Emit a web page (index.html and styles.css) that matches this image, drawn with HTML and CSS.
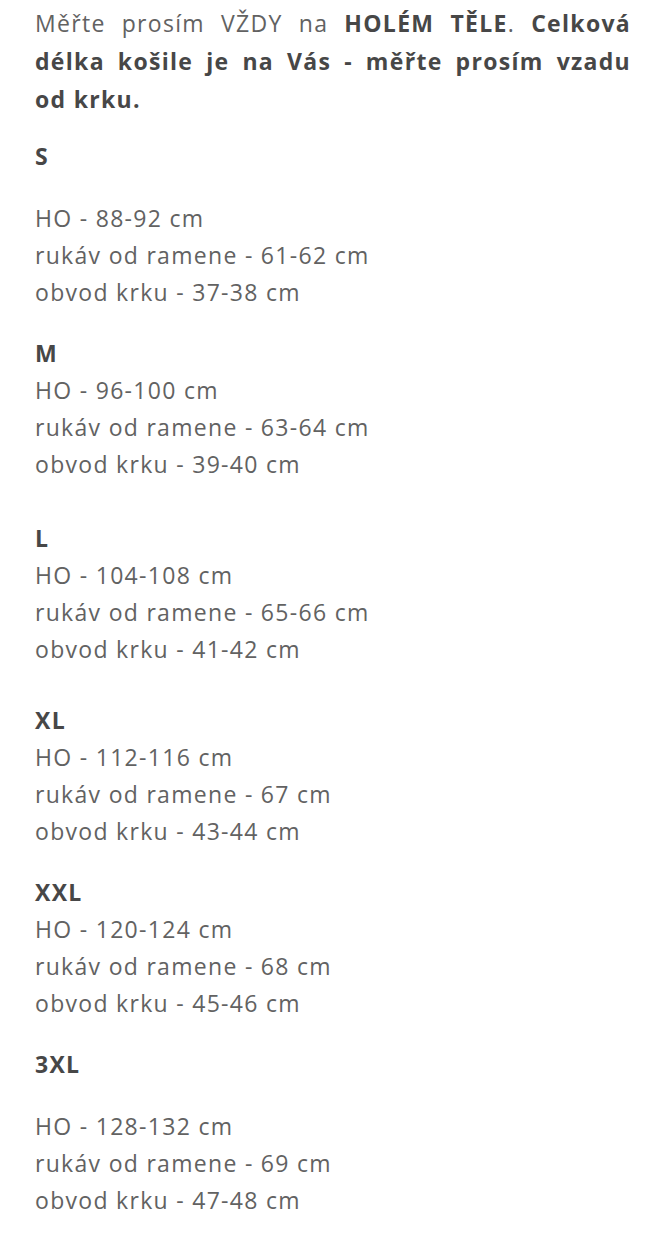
FILE: index.html
```html
<!DOCTYPE html>
<html lang="cs">
<head>
<meta charset="utf-8">
<title>Tabulka velikostí</title>
<link rel="stylesheet" href="styles.css">
</head>
<body>
<main class="sizes">
  <p class="intro">Měřte prosím VŽDY na <strong>HOLÉM TĚLE</strong>. <strong>Celková délka košile je na Vás - měřte prosím vzadu <span class="intro-tail">od krku.</span></strong></p>

  <section class="size size--split size--first">
    <h3 class="size-name">S</h3>
    <p class="size-data">HO - 88-92 cm<br>rukáv od ramene - 61-62 cm<br>obvod krku - 37-38 cm</p>
  </section>

  <section class="size">
    <h3 class="size-name">M</h3>
    <p class="size-data">HO - 96-100 cm<br>rukáv od ramene - 63-64 cm<br>obvod krku - 39-40 cm</p>
  </section>

  <section class="size size--l">
    <h3 class="size-name">L</h3>
    <p class="size-data">HO - 104-108 cm<br>rukáv od ramene - 65-66 cm<br>obvod krku - 41-42 cm</p>
  </section>

  <section class="size size--xl">
    <h3 class="size-name">XL</h3>
    <p class="size-data">HO - 112-116 cm<br>rukáv od ramene - 67 cm<br>obvod krku - 43-44 cm</p>
  </section>

  <section class="size">
    <h3 class="size-name">XXL</h3>
    <p class="size-data">HO - 120-124 cm<br>rukáv od ramene - 68 cm<br>obvod krku - 45-46 cm</p>
  </section>

  <section class="size size--split">
    <h3 class="size-name">3XL</h3>
    <p class="size-data">HO - 128-132 cm<br>rukáv od ramene - 69 cm<br>obvod krku - 47-48 cm</p>
  </section>
</main>
</body>
</html>
```

FILE: styles.css
```css
html, body {
  margin: 0;
  padding: 0;
  background: #ffffff;
}

body {
  font-family: "Open Sans", "Noto Sans", sans-serif;
  font-size: 23px;
  letter-spacing: 1.3px;
  line-height: 37px;
  color: #626262;
}

.sizes {
  padding: 4px 28px 30px 35px;
}

.intro {
  margin: 0;
  line-height: 38px;
  text-align: justify;
  word-spacing: 4px;
}

.intro strong {
  font-weight: 700;
  color: #474747;
}

.intro-tail {
  word-spacing: 0;
}

.size {
  margin-top: 24px;
}

.size--first {
  margin-top: 20px;
}

.size--l {
  margin-top: 37px;
}

.size--xl {
  margin-top: 34px;
}

.size-name {
  margin: 0;
  font-size: 23px;
  font-weight: 700;
  line-height: 37px;
  color: #474747;
}

.size-data {
  margin: 0;
}

.size--split .size-data {
  margin-top: 25px;
}
```
